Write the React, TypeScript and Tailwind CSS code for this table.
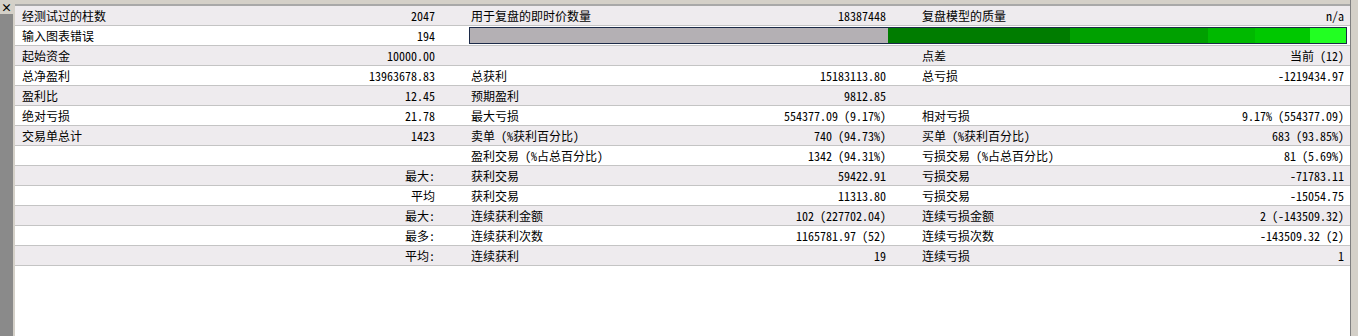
const rows: [string, string, string, string, string, string][] = [
  ["经测试过的柱数", "2047", "用于复盘的即时价数量", "18387448", "复盘模型的质量", "n/a"],
  ["输入图表错误", "194", "", "", "", ""],
  ["起始资金", "10000.00", "", "", "点差", "当前 (12)"],
  ["总净盈利", "13963678.83", "总获利", "15183113.80", "总亏损", "-1219434.97"],
  ["盈利比", "12.45", "预期盈利", "9812.85", "", ""],
  ["绝对亏损", "21.78", "最大亏损", "554377.09 (9.17%)", "相对亏损", "9.17% (554377.09)"],
  ["交易单总计", "1423", "卖单 (%获利百分比)", "740 (94.73%)", "买单 (%获利百分比)", "683 (93.85%)"],
  ["", "", "盈利交易 (%占总百分比)", "1342 (94.31%)", "亏损交易 (%占总百分比)", "81 (5.69%)"],
  ["", "最大:", "获利交易", "59422.91", "亏损交易", "-71783.11"],
  ["", "平均", "获利交易", "11313.80", "亏损交易", "-15054.75"],
  ["", "最大:", "连续获利金额", "102 (227702.04)", "连续亏损金额", "2 (-143509.32)"],
  ["", "最多:", "连续获利次数", "1165781.97 (52)", "连续亏损次数", "-143509.32 (2)"],
  ["", "平均:", "连续获利", "19", "连续亏损", "1"],
];

function QualityBar() {
  return (
    <div className="ml-[7px] mr-[3px] mt-[1px] flex h-[17px] border border-[#1c2a48]">
      <div className="w-[418px] bg-[#b4b0b4]" />
      <div className="w-[182px] bg-[#007c00]" />
      <div className="w-[138px] bg-[#00a000]" />
      <div className="w-[47px] bg-[#00b900]" />
      <div className="w-[55px] bg-[#00c800]" />
      <div className="flex-1 bg-[#22ff22]" />
    </div>
  );
}

export default function App() {
  return (
    <div
      className="flex h-[336px] w-[1358px] overflow-hidden bg-white text-[12px] text-black"
      style={{ fontFamily: 'SimSun, "Noto Sans Mono CJK SC", "Noto Sans CJK SC", monospace' }}
    >
      <div className="flex w-[15px] flex-col border-r-2 border-[#d4d0c8] bg-[#8a8a8a]">
        <div className="flex h-[14px] items-center justify-center bg-[#d4d0c8] text-[11px] font-bold leading-none">×</div>
      </div>
      <div className="flex flex-1 flex-col">
        <div className="h-[6px] border-b-2 border-[#a8a8a8] bg-[#d4d0c8]" />
        {rows.map((r, i) => (
          <div
            key={i}
            className={`flex h-[20px] border-b border-[#c4c4c4] leading-[19px] ${i % 2 === 0 ? "bg-[#eeebee]" : "bg-white"}`}
          >
            <div className="flex w-[447px] justify-between pl-[7px] pr-[27px]">
              <span>{r[0]}</span>
              <span>{r[1]}</span>
            </div>
            {i === 1 ? (
              <div className="flex-1">
                <QualityBar />
              </div>
            ) : (
              <>
                <div className="flex w-[451px] justify-between pl-[9px] pr-[27px]">
                  <span>{r[2]}</span>
                  <span>{r[3]}</span>
                </div>
                <div className="flex flex-1 justify-between pl-[9px] pr-[6px]">
                  <span>{r[4]}</span>
                  <span>{r[5]}</span>
                </div>
              </>
            )}
          </div>
        ))}
        <div className="flex-1" />
      </div>
      <div className="w-[8px] border-l border-[#808080] bg-[#d4d0c8]" />
    </div>
  );
}
